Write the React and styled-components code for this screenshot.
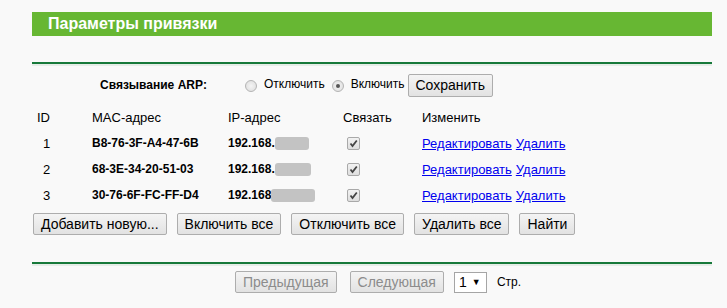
import { Fragment } from "react";
import styled, { createGlobalStyle } from "styled-components";

const GlobalStyle = createGlobalStyle`
  html, body {
    margin: 0;
    padding: 0;
    background: #f9f9f9;
    font-family: "Liberation Sans", Arial, sans-serif;
    color: #000;
  }
`;

const Page = styled.div`
  width: 680px;
  padding: 12px 0 0 32px;
`;

const TitleBar = styled.div`
  height: 24px;
  line-height: 24px;
  background: #67b733;
  color: #fff;
  font-size: 16px;
  font-weight: bold;
  padding-left: 16px;
`;

const Divider = styled.div`
  height: 2px;
  background: #17793a;
  margin-top: ${(p) => p.$top}px;
  box-shadow: 0 2px 0 #e6ede8;
`;

const ArpRow = styled.div`
  display: flex;
  align-items: center;
  height: 24px;
  margin-top: 9px;
  padding-left: 68px;
`;

const ArpLabel = styled.span`
  width: 145px;
  font-size: 12px;
  font-weight: bold;
`;

const RadioLabel = styled.label`
  display: flex;
  align-items: center;
  gap: 7px;
  margin-right: ${(p) => p.$gap}px;
  font-size: 12px;
  position: relative;
  top: -1px;
`;

const Radio = styled.span`
  width: 10px;
  height: 10px;
  border-radius: 50%;
  border: 1px solid #b4b4b4;
  background: radial-gradient(circle, #f4f4f4 0%, #dcdcdc 100%);
  display: flex;
  align-items: center;
  justify-content: center;
  margin-top: 3px;
  &::after {
    content: "";
    width: 4px;
    height: 4px;
    border-radius: 50%;
    background: ${(p) => (p.$checked ? "#555" : "transparent")};
  }
`;

const Button = styled.button`
  height: ${(p) => (p.$small ? 22 : 23)}px;
  padding: 0 7px;
  font-family: inherit;
  font-size: 14px;
  color: ${(p) => (p.disabled ? "#8c8c8c" : "#000")};
  background: linear-gradient(#f4f4f4, #e2e2e2);
  border: 1px solid #adadad;
  border-radius: 2px;
  cursor: pointer;
`;

const Table = styled.div`
  display: grid;
  grid-template-columns: 60px 136px 115px 79px 1fr;
  grid-auto-rows: 26px;
  margin-top: 7px;
  align-items: center;
`;

const HeadCell = styled.div`
  font-size: 13px;
  padding-left: ${(p) => p.$pad || 0}px;
`;

const Cell = styled.div`
  font-size: ${(p) => (p.$bold ? 12 : 13)}px;
  font-weight: ${(p) => (p.$bold ? "bold" : "normal")};
  padding-left: ${(p) => p.$pad || 0}px;
  display: flex;
  align-items: center;
  white-space: nowrap;
`;

const Blur = styled.span`
  display: inline-block;
  width: ${(p) => p.$w}px;
  height: 13px;
  background: #c3c3c3;
  border-radius: 3px;
  filter: blur(0.6px);
`;

const Check = styled.span`
  width: 11px;
  height: 11px;
  border: 1px solid #a9a9a9;
  border-radius: 2px;
  background: linear-gradient(#f2f2f2, #dedede);
  display: flex;
  align-items: center;
  justify-content: center;
`;

const Link = styled.a`
  color: #0000ee;
  text-decoration: underline;
  margin-right: 4px;
  cursor: pointer;
`;

const ButtonRow = styled.div`
  display: flex;
  gap: 10px;
  margin-top: 5px;
  padding-left: 1px;
`;

const Pager = styled.div`
  display: flex;
  align-items: center;
  justify-content: center;
  margin-top: 7px;
  padding-left: 12px;
`;

const PagerButton = styled(Button)`
  margin-right: 13px;
`;

const Select = styled.div`
  width: 27px;
  height: 19px;
  border: 1px solid #a5a5a5;
  background: #fff;
  display: flex;
  align-items: center;
  gap: 5px;
  padding-left: 4px;
  font-size: 14px;
  margin-left: -3px;
  margin-right: 10px;
  span {
    font-size: 9px;
  }
`;

const PageText = styled.span`
  font-size: 12px;
`;

const rows = [
  { id: 1, mac: "B8-76-3F-A4-47-6B", ip: "192.168.", blur: 34 },
  { id: 2, mac: "68-3E-34-20-51-03", ip: "192.168.", blur: 36 },
  { id: 3, mac: "30-76-6F-FC-FF-D4", ip: "192.168", blur: 44 },
];

function CheckMark() {
  return (
    <svg width="9" height="9" viewBox="0 0 9 9">
      <path d="M1.5 4.5 L3.5 7 L7.8 1.5" fill="none" stroke="#444" strokeWidth="1.8" />
    </svg>
  );
}

export default function App() {
  return (
    <>
      <GlobalStyle />
      <Page>
        <TitleBar>Параметры привязки</TitleBar>
        <Divider $top={26} />

        <ArpRow>
          <ArpLabel>Связывание ARP:</ArpLabel>
          <RadioLabel $gap={7}>
            <Radio />
            Отключить
          </RadioLabel>
          <RadioLabel $gap={3}>
            <Radio $checked />
            Включить
          </RadioLabel>
          <Button>Сохранить</Button>
        </ArpRow>

        <Table>
          <HeadCell $pad={5}>ID</HeadCell>
          <HeadCell>MAC-адрес</HeadCell>
          <HeadCell>IP-адрес</HeadCell>
          <HeadCell>Связать</HeadCell>
          <HeadCell>Изменить</HeadCell>
          {rows.map((r) => (
            <Fragment key={r.id}>
              <Cell $pad={11}>{r.id}</Cell>
              <Cell $bold>{r.mac}</Cell>
              <Cell $bold>
                {r.ip}
                <Blur $w={r.blur} />
              </Cell>
              <Cell $pad={4}>
                <Check>
                  <CheckMark />
                </Check>
              </Cell>
              <Cell>
                <Link>Редактировать</Link>
                <Link>Удалить</Link>
              </Cell>
            </Fragment>
          ))}
        </Table>

        <ButtonRow>
          <Button $small>Добавить новую...</Button>
          <Button $small>Включить все</Button>
          <Button $small>Отключить все</Button>
          <Button $small>Удалить все</Button>
          <Button $small>Найти</Button>
        </ButtonRow>

        <Divider $top={27} />

        <Pager>
          <PagerButton $small disabled>Предыдущая</PagerButton>
          <PagerButton $small disabled>Следующая</PagerButton>
          <Select>
            1<span>▼</span>
          </Select>
          <PageText>Стр.</PageText>
        </Pager>
      </Page>
    </>
  );
}
